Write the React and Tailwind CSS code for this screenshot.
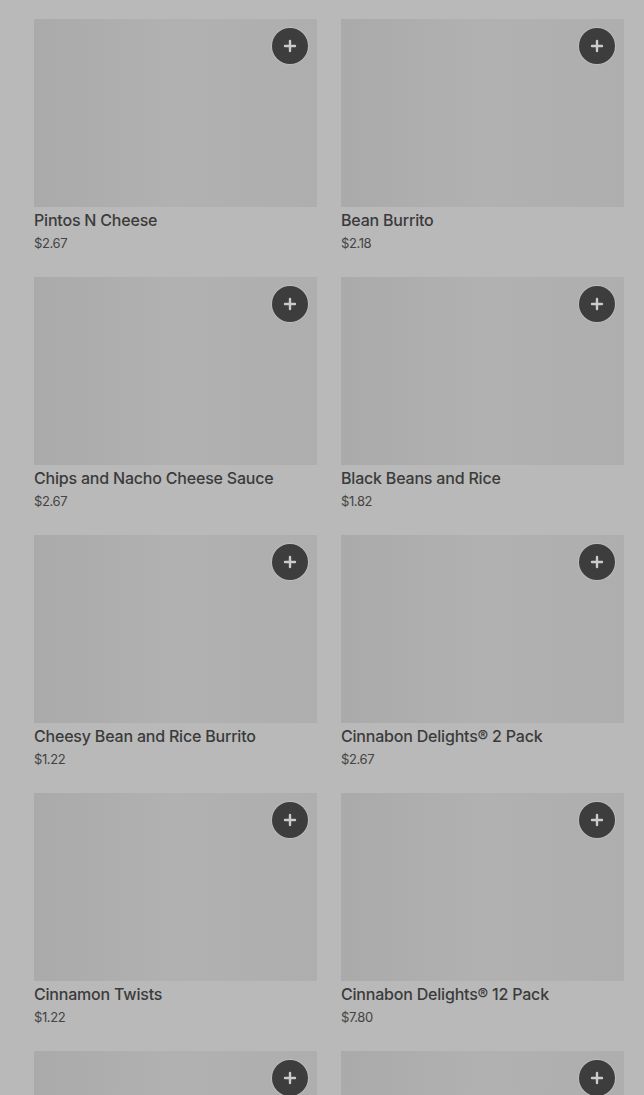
import React from 'react';

const items = [
  { name: 'Pintos N Cheese', price: '$2.67' },
  { name: 'Bean Burrito', price: '$2.18' },
  { name: 'Chips and Nacho Cheese Sauce', price: '$2.67' },
  { name: 'Black Beans and Rice', price: '$1.82' },
  { name: 'Cheesy Bean and Rice Burrito', price: '$1.22' },
  { name: 'Cinnabon Delights® 2 Pack', price: '$2.67' },
  { name: 'Cinnamon Twists', price: '$1.22' },
  { name: 'Cinnabon Delights® 12 Pack', price: '$7.80' },
  { name: 'Crunchy Taco', price: '$1.82' },
  { name: 'Soft Taco', price: '$1.82' },
];

function AddButton() {
  return (
    <button className="absolute top-[9px] right-[9px] w-9 h-9 rounded-full bg-[#3d3d3d] ring-1 ring-[#c4c4c4]/60 flex items-center justify-center">
      <svg width="14" height="14" viewBox="0 0 14 14">
        <path d="M7 2v10M2 7h10" stroke="#cbcbcb" strokeWidth="2.4" strokeLinecap="round" />
      </svg>
    </button>
  );
}

function ItemCard({ item }) {
  return (
    <div className="flex flex-col">
      <div className="relative h-[188px] bg-gradient-to-r from-[#aaaaaa] via-[#b1b1b1] to-[#aeaeae]">
        <AddButton />
      </div>
      <h3 className="mt-[1px] text-[16px] leading-[24px] font-medium text-[#3b3b3b] tracking-[-0.2px]">
        {item.name}
      </h3>
      <p className="text-[13px] leading-[22px] text-[#444444] tracking-[-0.4px]">{item.price}</p>
    </div>
  );
}

export default function App() {
  return (
    <div
      className="min-h-screen bg-[#b9b9b9] pl-[34px] pr-[20px] pt-[19px] pb-6"
      style={{ fontFamily: 'Inter, Roboto, "Noto Sans", sans-serif' }}
    >
      <div className="grid grid-cols-2 gap-x-[24px] gap-y-[23px]">
        {items.map((item) => (
          <ItemCard key={item.name} item={item} />
        ))}
      </div>
    </div>
  );
}
